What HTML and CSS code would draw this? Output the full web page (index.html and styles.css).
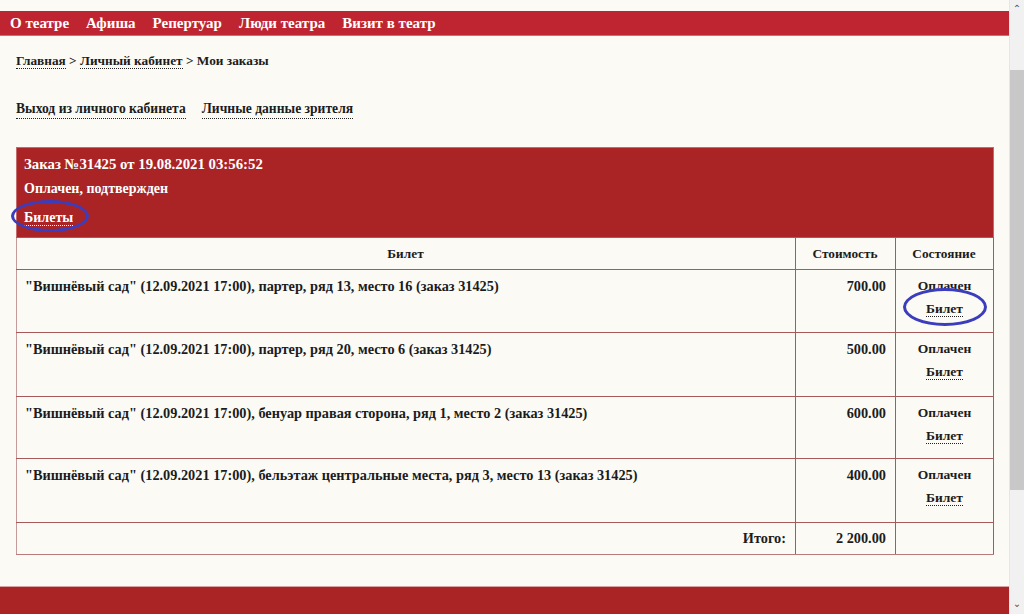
FILE: index.html
```html
<!DOCTYPE html>
<html lang="ru">
<head>
<meta charset="utf-8">
<title>Мои заказы</title>
<link rel="stylesheet" href="styles.css">
</head>
<body>
<div class="page">
  <div class="topgap"></div>
  <nav class="nav">
    <a>О театре</a>
    <a>Афиша</a>
    <a>Репертуар</a>
    <a>Люди театра</a>
    <a>Визит в театр</a>
  </nav>
  <main class="content">
    <div class="crumbs"><a class="dot">Главная</a> &gt; <a class="dot">Личный кабинет</a> &gt; Мои заказы</div>
    <div class="links"><a class="dot">Выход из личного кабинета</a><a class="dot">Личные данные зрителя</a></div>
    <section class="order">
      <div class="order-head">
        <div class="oh-title">Заказ №31425 от 19.08.2021 03:56:52</div>
        <div class="oh-status">Оплачен, подтвержден</div>
        <div class="oh-link"><a class="dot light">Билеты</a><span class="mark mark-a"></span></div>
      </div>
      <table class="tickets">
        <thead>
          <tr><th class="c-name">Билет</th><th class="c-cost">Стоимость</th><th class="c-state">Состояние</th></tr>
        </thead>
        <tbody>
          <tr class="r1"><td>"Вишнёвый сад" (12.09.2021 17:00), партер, ряд 13, место 16 (заказ 31425)</td><td class="num">700.00</td><td class="state">Оплачен<br><span class="tk"><a class="dot">Билет</a><span class="mark mark-b"></span></span></td></tr>
          <tr class="r2"><td>"Вишнёвый сад" (12.09.2021 17:00), партер, ряд 20, место 6 (заказ 31425)</td><td class="num">500.00</td><td class="state">Оплачен<br><span class="tk"><a class="dot">Билет</a></span></td></tr>
          <tr class="r3"><td>"Вишнёвый сад" (12.09.2021 17:00), бенуар правая сторона, ряд 1, место 2 (заказ 31425)</td><td class="num">600.00</td><td class="state">Оплачен<br><span class="tk"><a class="dot">Билет</a></span></td></tr>
          <tr class="r4"><td>"Вишнёвый сад" (12.09.2021 17:00), бельэтаж центральные места, ряд 3, место 13 (заказ 31425)</td><td class="num">400.00</td><td class="state">Оплачен<br><span class="tk"><a class="dot">Билет</a></span></td></tr>
          <tr class="total"><td class="num">Итого:</td><td class="num">2 200.00</td><td></td></tr>
        </tbody>
      </table>
    </section>
  </main>
  <footer class="footer"></footer>
</div>
<div class="scrollbar">
  <div class="sb-arrow">&#8963;</div>
  <div class="sb-track"><div class="sb-thumb"></div></div>
  <div class="sb-arrow down">&#8964;</div>
</div>
</body>
</html>
```

FILE: styles.css
```css
html, body {
  margin: 0;
  padding: 0;
  height: 614px;
  overflow: hidden;
}
body {
  display: flex;
  background: #fbfaf5;
  font-family: "Liberation Serif", "DejaVu Serif", serif;
  font-weight: bold;
  color: #1c1c1c;
}
.page {
  flex: 1;
  display: flex;
  flex-direction: column;
  min-width: 0;
}
.topgap { height: 11px; }
.nav {
  height: 26px;
  background: #bf2530;
  display: flex;
  align-items: center;
  gap: 17px;
  padding-left: 10px;
  padding-top: 1px;
  border-bottom: 1px solid #d66a6e;
  box-sizing: border-box;
}
.nav a {
  color: #fff;
  font-size: 15px;
}
.content {
  padding: 0 15px 0 16px;
  flex: 1;
}
.dot {
  border-bottom: 1px dotted #222;
  padding-bottom: 0;
}
.dot.light { border-bottom-color: #fff; }
.crumbs {
  font-size: 13.3px;
  margin-top: 16px;
  line-height: 18px;
}
.links {
  font-size: 13.6px;
  margin-top: 30px;
  line-height: 18px;
  display: flex;
  gap: 16px;
}
.order {
  margin-top: 28px;
}
.order-head {
  background: #aa2426;
  color: #fff;
  font-size: 14px;
  padding: 8px 7px 0 7px;
  height: 90px;
  box-sizing: border-box;
  border: 1px solid #c56a6a;
  border-bottom: none;
}
.oh-title { line-height: 17px; font-size: 14.8px; }
.oh-status { line-height: 17px; margin-top: 7px; }
.oh-link { line-height: 17px; margin-top: 12px; position: relative; display: inline-block; }
.mark {
  position: absolute;
  border: 3px solid #3b3dbd;
  border-radius: 50%;
  box-sizing: border-box;
  pointer-events: none;
}
.mark-a { left: -13px; top: -9px; width: 78px; height: 32px; }
.mark-b { left: -23px; top: -12px; width: 84px; height: 38px; }
.tickets {
  width: 100%;
  border-collapse: collapse;
  font-size: 14.3px;
}
.tickets th, .tickets td {
  border: 1px solid #a8595b;
  padding: 0 9px 0 8px;
}
.tickets tr > :first-child { border-left-color: #c49a9a; }
.tickets th {
  height: 31px;
  font-weight: bold;
  font-size: 13.3px;
}
.c-cost { width: 82px; }
.c-state { width: 80px; }
.tickets td {
  vertical-align: top;
  padding-top: 7px;
  line-height: 18px;
}
.r1 td { height: 55px; }
.r2 td { height: 56px; }
.r3 td { height: 54px; }
.r4 td { height: 56px; }
.tickets td.num { text-align: right; padding-right: 9px; }
.tickets td.state {
  text-align: center;
  padding-left: 4px;
  padding-right: 4px;
  line-height: 23px;
  padding-top: 4px;
  font-size: 13.5px;
}
.tk { position: relative; display: inline-block; line-height: 18px; }
.total td { height: 25px; padding-top: 6px; }
.total td:first-child { border-left-color: #c49a9a; }
.tickets tr:last-child td { border-bottom-color: #b97a7b; }
.footer {
  height: 27px;
  margin-top: 31px;
  background: #aa2426;
  border-top: 1px solid #d9a3a3;
}
.scrollbar {
  width: 15px;
  background: #f1f1f1;
  display: flex;
  flex-direction: column;
  border-left: 1px solid #e6e6e6;
  box-sizing: border-box;
}
.sb-arrow {
  height: 15px;
  font-family: "DejaVu Sans", sans-serif;
  font-size: 10px;
  color: #555;
  text-align: center;
  line-height: 17px;
  font-weight: normal;
}
.sb-arrow.down { line-height: 10px; }
.sb-track { flex: 1; padding-top: 55px; }
.sb-thumb {
  height: 420px;
  background: #c8c8c8;
}
```
